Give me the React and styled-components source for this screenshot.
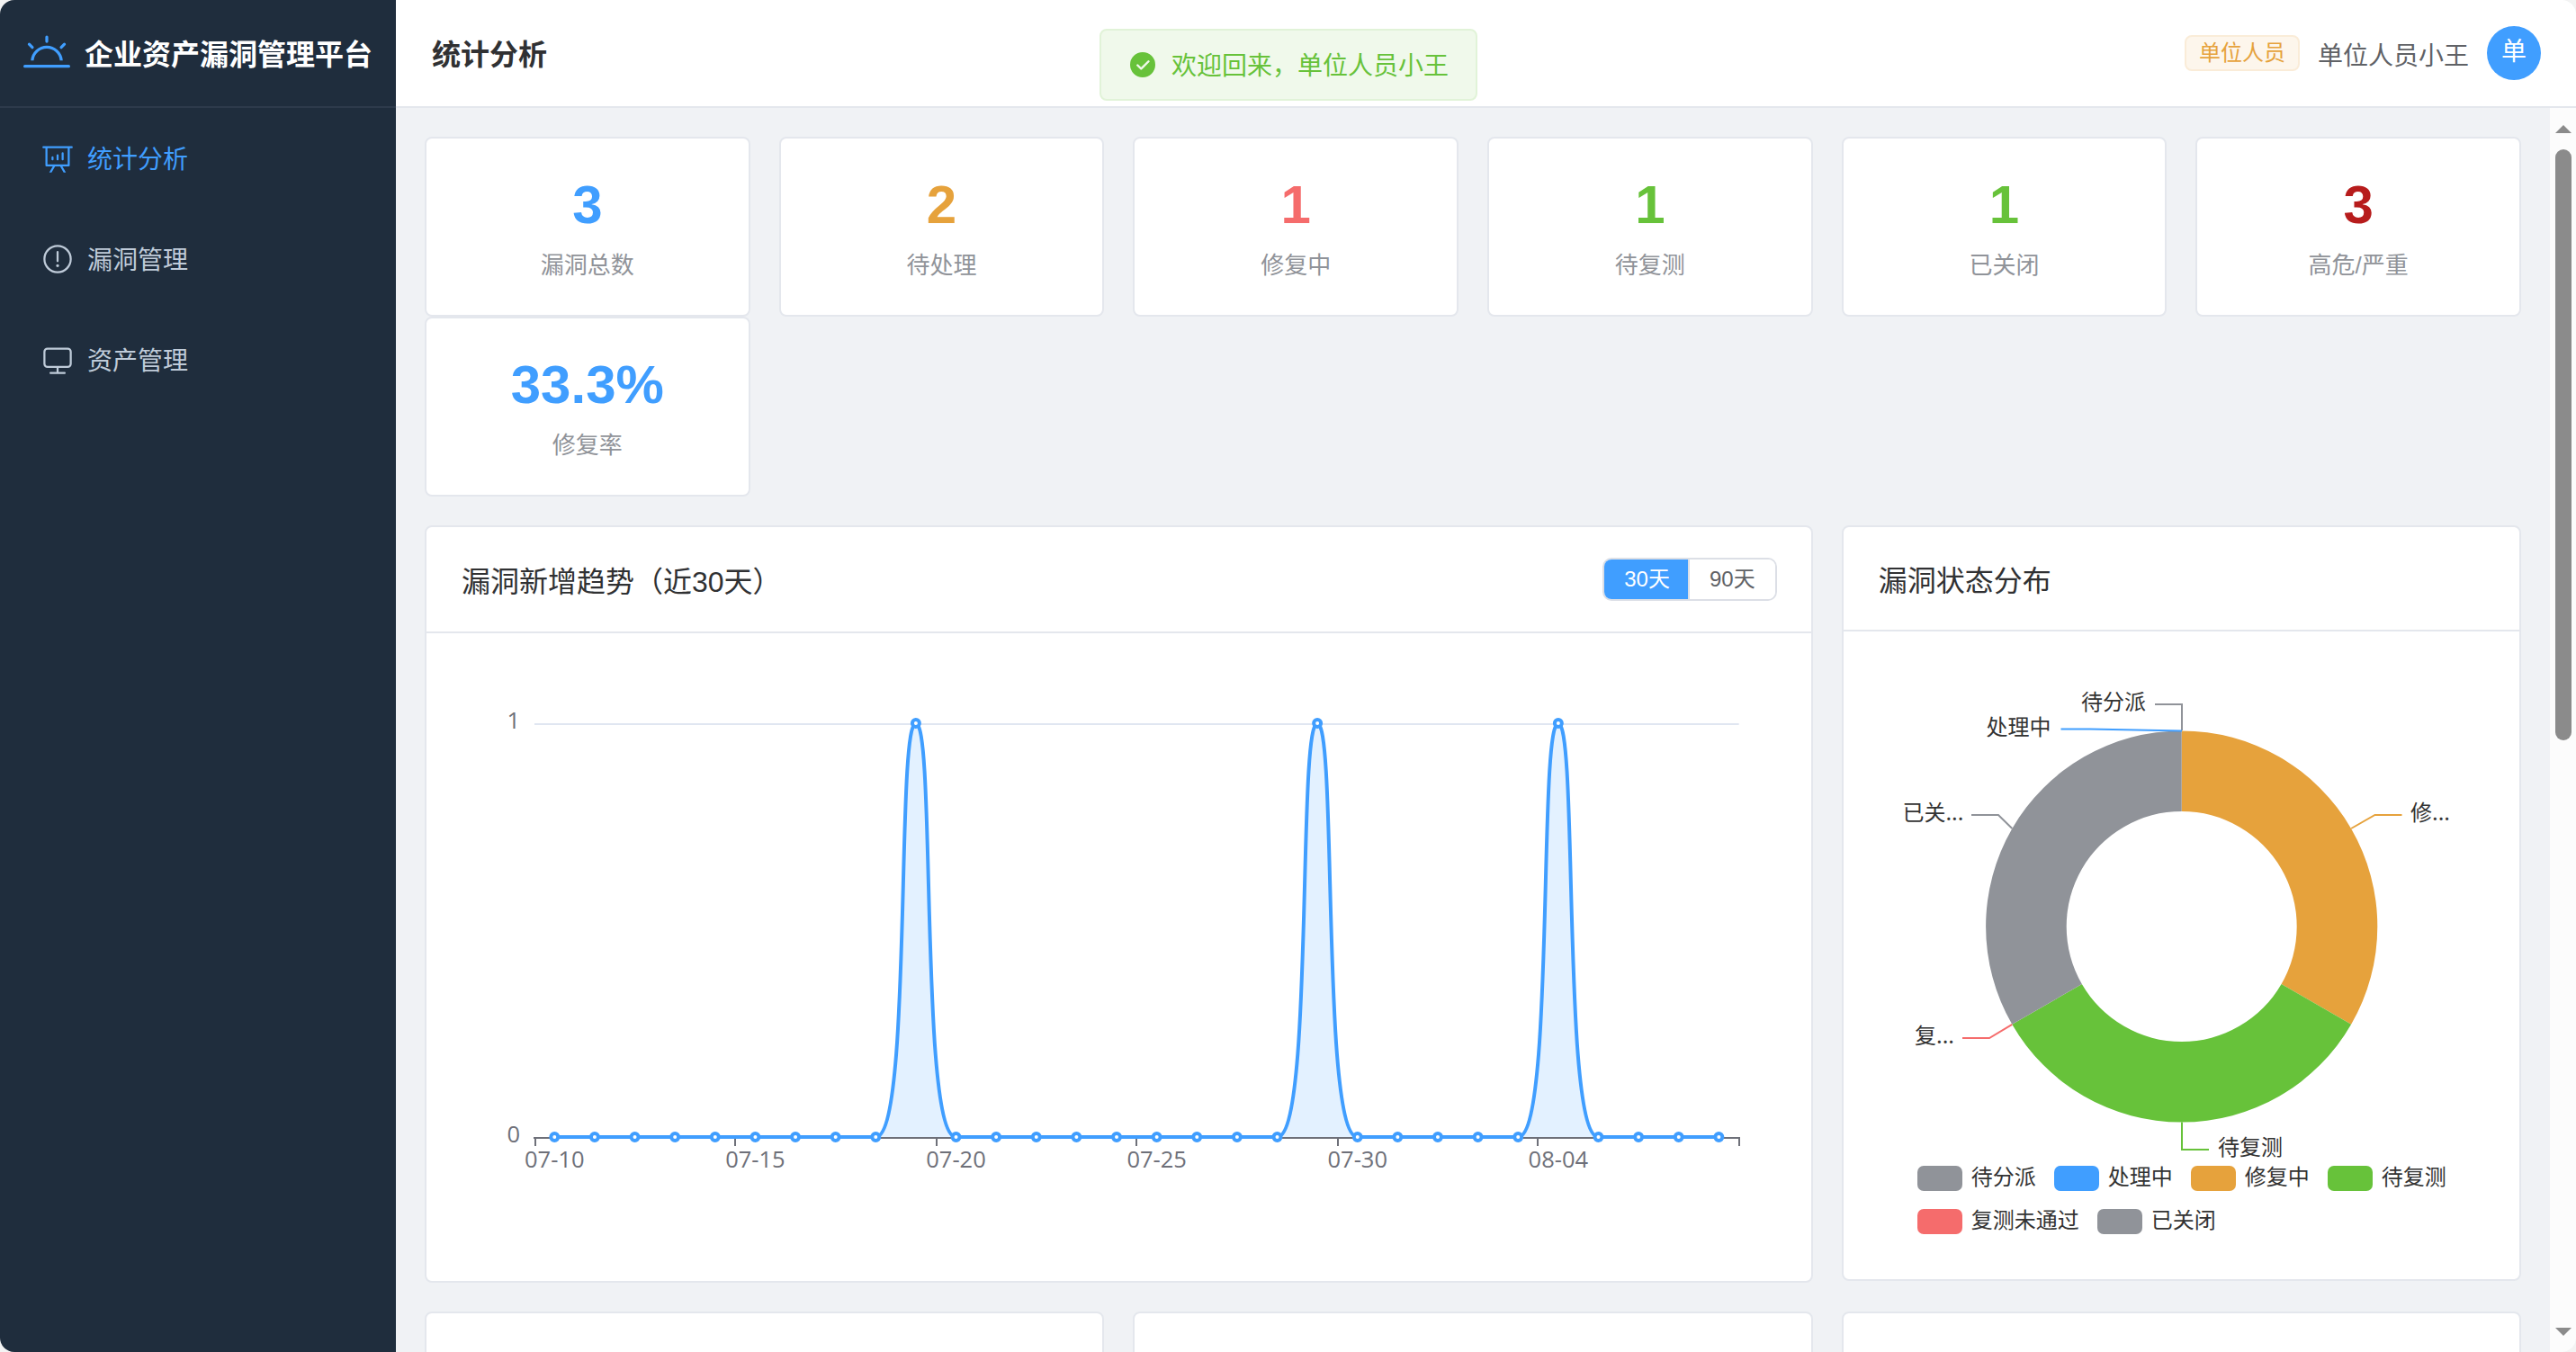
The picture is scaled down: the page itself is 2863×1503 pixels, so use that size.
import React, { useState } from 'react';
import styled, { createGlobalStyle, css } from 'styled-components';

const GlobalStyle = createGlobalStyle`
  html, body, #root {
    height: 100%;
  }
  body {
    margin: 0;
    background: #f3f3f3;
    font-family: 'Liberation Sans', 'Noto Sans CJK SC', sans-serif;
    overflow: hidden;
  }
  * {
    box-sizing: border-box;
  }
`;

const Layout = styled.div`
  display: flex;
  height: 100vh;
  border-radius: 16px;
  overflow: hidden;
  background: #f0f2f5;
`;

const Sidebar = styled.aside`
  width: 440px;
  flex-shrink: 0;
  background: #1f2d3d;
`;

const Logo = styled.div`
  display: flex;
  align-items: center;
  justify-content: center;
  gap: 16px;
  height: 120px;
  border-bottom: 2px solid #2d3a4b;
  color: #fff;
  font-size: 32px;
  font-weight: 700;
  white-space: nowrap;
`;

const LogoText = styled.span`
  padding-top: 4px;
  line-height: 44px;
`;

const MenuItem = styled.a`
  display: flex;
  align-items: center;
  gap: 15px;
  height: 112px;
  padding-left: 46px;
  font-size: 28px;
  color: ${props => (props.$active ? '#409eff' : '#bfcbd9')};
`;

const MenuText = styled.span`
  padding-bottom: 3px;
`;

const Main = styled.div`
  flex: 1;
  min-width: 0;
  display: flex;
  flex-direction: column;
`;

const Header = styled.header`
  display: flex;
  align-items: center;
  justify-content: space-between;
  flex-shrink: 0;
  height: 120px;
  padding: 0 39px 0 40px;
  background: #fff;
  border-bottom: 2px solid #e4e7ed;
`;

const PageTitle = styled.h1`
  margin: 0;
  padding-top: 4px;
  font-size: 32px;
  line-height: 44px;
  color: #303133;
`;

const User = styled.div`
  display: flex;
  align-items: center;
  gap: 20px;
  font-size: 28px;
  color: #606266;
`;

const UserName = styled.span`
  padding-top: 2px;
`;

const Tag = styled.span`
  height: 40px;
  padding: 0 14px;
  border: 2px solid #faecd8;
  border-radius: 8px;
  background: #fdf6ec;
  color: #e6a23c;
  font-size: 24px;
  line-height: 36px;
`;

const Avatar = styled.span`
  width: 60px;
  height: 60px;
  border-radius: 50%;
  background: #409eff;
  color: #fff;
  line-height: 58px;
  text-align: center;
`;

const Body = styled.div`
  flex: 1;
  min-height: 0;
  display: flex;
`;

const Content = styled.main`
  flex: 1;
  min-width: 0;
  padding: 32px;
  overflow: hidden;
`;

const StatGrid = styled.div`
  display: grid;
  grid-template-columns: repeat(6, 1fr);
  column-gap: 32px;
  margin-bottom: 32px;
`;

const card = css`
  background: #fff;
  border: 2px solid #e4e7ed;
  border-radius: 8px;
`;

const StatCard = styled.div`
  ${card}
  height: 200px;
  padding-top: 38px;
  text-align: center;
`;

const StatValue = styled.div`
  font-size: 60px;
  font-weight: 700;
  line-height: 72px;
  color: ${props => props.$color};
`;

const StatLabel = styled.div`
  margin-top: 13px;
  font-size: 26px;
  line-height: 36px;
  color: #909399;
`;

const PanelRow = styled.div`
  display: grid;
  grid-template-columns: repeat(12, 1fr);
  column-gap: 32px;
  align-items: start;
  margin-bottom: 32px;
`;

const Panel = styled.section`
  ${card}
  grid-column: span ${props => props.$span};
  min-height: ${props => props.$minHeight || 0}px;
`;

const PanelHeader = styled.div`
  display: flex;
  align-items: center;
  justify-content: space-between;
  height: ${props => props.$height}px;
  padding: 0 38px 0 39px;
  border-bottom: 2px solid #e4e7ed;
  font-size: 32px;
  color: #303133;
`;

const PanelBody = styled.div`
  height: 720px;
  padding: 40px;
`;

const RadioGroup = styled.div`
  display: flex;
  height: 48px;
  border: 2px solid #dcdfe6;
  border-radius: 10px;
  overflow: hidden;
`;

const RadioButton = styled.button`
  padding: ${props => (props.$first ? '0 20px 0 22px' : '0 22px')};
  border: 0;
  border-left: ${props => (props.$first ? 0 : '2px solid #dcdfe6')};
  background: ${props => (props.$active ? '#409eff' : '#fff')};
  color: ${props => (props.$active ? '#fff' : '#606266')};
  font-family: inherit;
  font-size: 24px;
  line-height: 42px;
`;

const Chart = styled.svg`
  display: block;
  width: 100%;
  height: ${props => props.$height}px;
  overflow: visible;
`;

const AxisText = styled.text`
  font-family: 'Open Sans', 'Noto Sans', sans-serif;
  font-size: 25.5px;
  fill: #6e7079;
`;

const PieText = styled.text`
  font-family: 'Noto Sans CJK SC', sans-serif;
  font-size: 24px;
  fill: #333;
`;

const Legend = styled.div`
  display: flex;
  flex-wrap: wrap;
  gap: 20px;
  padding: 0 20px 0 42px;
  font-family: 'Noto Sans CJK SC', sans-serif;
`;

const LegendItem = styled.span`
  display: flex;
  align-items: center;
  gap: 10px;
  height: 28px;
  font-size: 24px;
  line-height: 24px;
  color: #333;
`;

const LegendText = styled.span`
  margin-top: -7px;
`;

const Swatch = styled.i`
  width: 50px;
  height: 28px;
  border-radius: 7px;
  background: ${props => props.$color};
`;

const Scrollbar = styled.div`
  display: flex;
  flex-direction: column;
  align-items: center;
  justify-content: space-between;
  width: 29px;
  padding: 19px 0 18px;
  background: #fcfcfc;
`;

const Arrow = styled.i`
  width: 0;
  height: 0;
  border: 9px solid transparent;
  border-top: ${props => (props.$down ? '9px solid #8b8b8b' : 0)};
  border-bottom: ${props => (props.$down ? 0 : '9px solid #8b8b8b')};
`;

const Thumb = styled.div`
  width: 18px;
  height: 657px;
  margin: 18px 0 auto;
  border-radius: 9px;
  background: #8b8b8b;
`;

const Message = styled.div`
  position: absolute;
  top: 32px;
  left: 1222px;
  display: flex;
  align-items: center;
  gap: 16px;
  width: 420px;
  height: 80px;
  padding-left: 30px;
  border: 2px solid #e1f3d8;
  border-radius: 8px;
  background: #f0f9eb;
  color: #67c23a;
  font-size: 28px;
  white-space: nowrap;
`;

const MessageText = styled.span`
  padding-bottom: 3px;
`;

const icons = {
  sunrise:
    'M32 768h960a32 32 0 1 1 0 64H32a32 32 0 1 1 0-64zm129.408-96a352 352 0 0 1 701.184 0h-64.32a288 288 0 0 0-572.544 0h-64.32zM512 128a32 32 0 0 1 32 32v96a32 32 0 0 1-64 0v-96a32 32 0 0 1 32-32zm407.296 168.704a32 32 0 0 1 0 45.248l-67.84 67.84a32 32 0 1 1-45.248-45.248l67.84-67.84a32 32 0 0 1 45.248 0zm-814.592 0a32 32 0 0 1 45.248 0l67.84 67.84a32 32 0 1 1-45.248 45.248l-67.84-67.84a32 32 0 0 1 0-45.248z',
  analysis:
    'm665.216 768 110.848 192h-73.856L591.36 768H433.024L322.176 960H248.32l110.848-192H160a32 32 0 0 1-32-32V192H64a32 32 0 0 1 0-64h896a32 32 0 1 1 0 64h-64v544a32 32 0 0 1-32 32H665.216zM832 192H192v512h640V192zM352 448a32 32 0 0 1 32 32v64a32 32 0 0 1-64 0v-64a32 32 0 0 1 32-32zm160-64a32 32 0 0 1 32 32v128a32 32 0 0 1-64 0V416a32 32 0 0 1 32-32zm160-64a32 32 0 0 1 32 32v192a32 32 0 1 1-64 0V352a32 32 0 0 1 32-32z',
  warning:
    'M512 64a448 448 0 1 1 0 896 448 448 0 0 1 0-896zm0 832a384 384 0 0 0 0-768 384 384 0 0 0 0 768zm48-176a48 48 0 1 1-96 0 48 48 0 0 1 96 0zm-48-464a32 32 0 0 1 32 32v288a32 32 0 0 1-64 0V288a32 32 0 0 1 32-32z',
  monitor:
    'M544 768v128h192a32 32 0 1 1 0 64H288a32 32 0 1 1 0-64h192V768H192A128 128 0 0 1 64 640V256a128 128 0 0 1 128-128h640a128 128 0 0 1 128 128v384a128 128 0 0 1-128 128H544zM192 192a64 64 0 0 0-64 64v384a64 64 0 0 0 64 64h640a64 64 0 0 0 64-64V256a64 64 0 0 0-64-64H192z',
  success:
    'M512 64a448 448 0 1 1 0 896 448 448 0 0 1 0-896zm-55.808 536.384-99.52-99.584a38.4 38.4 0 1 0-54.336 54.336l126.72 126.72a38.272 38.272 0 0 0 54.336 0l262.4-262.464a38.4 38.4 0 1 0-54.272-54.336L456.192 600.384z',
};

const Icon = ({ name, size, color = 'currentColor' }) => (
  <svg viewBox="0 0 1024 1024" width={size} height={size} fill={color}>
    <path d={icons[name]} />
  </svg>
);

const menus = [
  { icon: 'analysis', title: '统计分析' },
  { icon: 'warning', title: '漏洞管理' },
  { icon: 'monitor', title: '资产管理' },
];

const stats = [
  { value: '3', label: '漏洞总数', color: '#409eff' },
  { value: '2', label: '待处理', color: '#e6a23c' },
  { value: '1', label: '修复中', color: '#f56c6c' },
  { value: '1', label: '待复测', color: '#67c23a' },
  { value: '1', label: '已关闭', color: '#67c23a' },
  { value: '3', label: '高危/严重', color: '#b71c1c' },
  { value: '33.3%', label: '修复率', color: '#409eff' },
];

const statuses = [
  { name: '待分派', color: '#909399' },
  { name: '处理中', color: '#409eff' },
  { name: '修复中', color: '#e6a23c' },
  { name: '待复测', color: '#67c23a' },
  { name: '复测未通过', color: '#f56c6c' },
  { name: '已关闭', color: '#909399' },
];

// trend chart: 30 days, grid inside a 1458.67x640 box
const LEFT = 80;
const RIGHT = 1418.67;
const TOP = 60;
const BASE = 520;
const STEP = (RIGHT - LEFT) / 30;
const peaks = [9, 19, 25];
const dayLabels = ['07-10', '07-15', '07-20', '07-25', '07-30', '08-04'];

const points = Array.from({ length: 30 }, (_, i) => ({
  x: LEFT + STEP * (i + 0.5),
  y: peaks.includes(i) ? TOP : BASE,
}));

const linePath = points.reduce((d, p, i) => {
  if (i === 0) return `M${p.x} ${p.y}`;
  const prev = points[i - 1];
  if (prev.y === p.y) return `${d}L${p.x} ${p.y}`;
  // flat ends get a long handle, the peak a short one
  const a = prev.y === BASE ? 0.912 : 0.5;
  const b = p.y === BASE ? 0.912 : 0.5;
  return `${d}C${prev.x + STEP * a} ${prev.y} ${p.x - STEP * b} ${p.y} ${p.x} ${p.y}`;
}, '');

// keeps the 2px ticks on whole pixels
const snap = v => 2 * Math.floor(v / 2) + 1;

const TrendChart = () => (
  <Chart $height={640} viewBox="0 0 1458.67 640">
    <path d={`M${LEFT} ${TOP + 1}H${RIGHT}`} stroke="#e0e6f1" strokeWidth="2" />
    <path d={`${linePath}Z`} fill="#409eff" fillOpacity="0.15" />
    <path d={`M${LEFT - 1} ${BASE + 1}H${RIGHT + 1}`} stroke="#6e7079" strokeWidth="2" />
    {[0, 5, 10, 15, 20, 25, 30].map(i => (
      <path key={i} d={`M${snap(LEFT + STEP * i + 0.4)} ${BASE}v10`} stroke="#6e7079" strokeWidth="2" />
    ))}
    <path d={linePath} fill="none" stroke="#409eff" strokeWidth="4" strokeLinejoin="bevel" />
    {points.map(p => (
      <circle key={p.x} cx={p.x} cy={p.y} r="4" fill="#fff" stroke="#409eff" strokeWidth="4" />
    ))}
    <AxisText x="64" y={TOP + 6} textAnchor="end">1</AxisText>
    <AxisText x="64" y={BASE + 6} textAnchor="end">0</AxisText>
    {dayLabels.map((label, i) => (
      <AxisText key={label} x={points[i * 5].x} y="554" textAnchor="middle">{label}</AxisText>
    ))}
  </Chart>
);

// donut: centre and radii inside the 671px wide chart box
const CX = 335.7;
const CY = 288;
const polar = (r, deg) => {
  const a = (deg * Math.PI) / 180;
  return `${CX + r * Math.sin(a)} ${CY - r * Math.cos(a)}`;
};
const ring = (from, to) =>
  `M${polar(217.6, from)}A217.6 217.6 0 0 1 ${polar(217.6, to)}L${polar(128, to)}A128 128 0 0 0 ${polar(128, from)}Z`;

const guides = [
  { text: '待分派', x: 224, y: 47, line: 'M306 41H336V70', color: '#909399' },
  { text: '处理中', x: 118.5, y: 75, line: 'M201.5 68.5H234L336 70.4', color: '#409eff' },
  { text: '已关...', x: 25.5, y: 170, line: 'M102 164H132L147.3 179', color: '#909399' },
  { text: '复...', x: 39, y: 418, line: 'M92 412H122L147.3 396.8', color: '#f56c6c' },
  { text: '修...', x: 590, y: 170, line: 'M580.5 164H550.5L524.2 179', color: '#e6a23c' },
  { text: '待复测', x: 376, y: 542, line: 'M336 505.6V536H366', color: '#67c23a' },
];

const StatusChart = () => (
  <>
    <Chart $height={554} viewBox="0 0 671.33 554">
      <path d={ring(0, 120)} fill="#e6a23c" />
      <path d={ring(120, 240)} fill="#67c23a" />
      <path d={ring(240, 360)} fill="#909399" />
      {guides.map(g => (
        <g key={g.text}>
          <path d={g.line} fill="none" stroke={g.color} strokeWidth="2" />
          <PieText x={g.x} y={g.y}>{g.text}</PieText>
        </g>
      ))}
    </Chart>
    <Legend>
      {statuses.map(s => (
        <LegendItem key={s.name}>
          <Swatch $color={s.color} />
          <LegendText>{s.name}</LegendText>
        </LegendItem>
      ))}
    </Legend>
  </>
);

function App() {
  const [days, setDays] = useState(30);

  return (
    <>
      <GlobalStyle />
      <Layout>
        <Sidebar>
          <Logo>
            <Icon name="sunrise" size={52} color="#409eff" />
            <LogoText>企业资产漏洞管理平台</LogoText>
          </Logo>
          {menus.map((m, i) => (
            <MenuItem key={m.title} $active={i === 0}>
              <Icon name={m.icon} size={36} />
              <MenuText>{m.title}</MenuText>
            </MenuItem>
          ))}
        </Sidebar>

        <Main>
          <Header>
            <PageTitle>统计分析</PageTitle>
            <User>
              <Tag>单位人员</Tag>
              <UserName>单位人员小王</UserName>
              <Avatar>单</Avatar>
            </User>
          </Header>

          <Body>
            <Content>
              <StatGrid>
                {stats.map(s => (
                  <StatCard key={s.label}>
                    <StatValue $color={s.color}>{s.value}</StatValue>
                    <StatLabel>{s.label}</StatLabel>
                  </StatCard>
                ))}
              </StatGrid>

              <PanelRow>
                <Panel $span={8}>
                  <PanelHeader $height={118}>
                    <span>漏洞新增趋势（近{days}天）</span>
                    <RadioGroup>
                      <RadioButton $first $active={days === 30} onClick={() => setDays(30)}>30天</RadioButton>
                      <RadioButton $active={days === 90} onClick={() => setDays(90)}>90天</RadioButton>
                    </RadioGroup>
                  </PanelHeader>
                  <PanelBody>
                    <TrendChart />
                  </PanelBody>
                </Panel>
                <Panel $span={4}>
                  <PanelHeader $height={116}>漏洞状态分布</PanelHeader>
                  <PanelBody>
                    <StatusChart />
                  </PanelBody>
                </Panel>
              </PanelRow>

              <PanelRow>
                <Panel $span={4} $minHeight={300} />
                <Panel $span={4} $minHeight={300} />
                <Panel $span={4} $minHeight={300} />
              </PanelRow>
            </Content>

            <Scrollbar>
              <Arrow />
              <Thumb />
              <Arrow $down />
            </Scrollbar>
          </Body>
        </Main>
      </Layout>

      <Message>
        <Icon name="success" size={32} />
        <MessageText>欢迎回来，单位人员小王</MessageText>
      </Message>
    </>
  );
}

export default App;
